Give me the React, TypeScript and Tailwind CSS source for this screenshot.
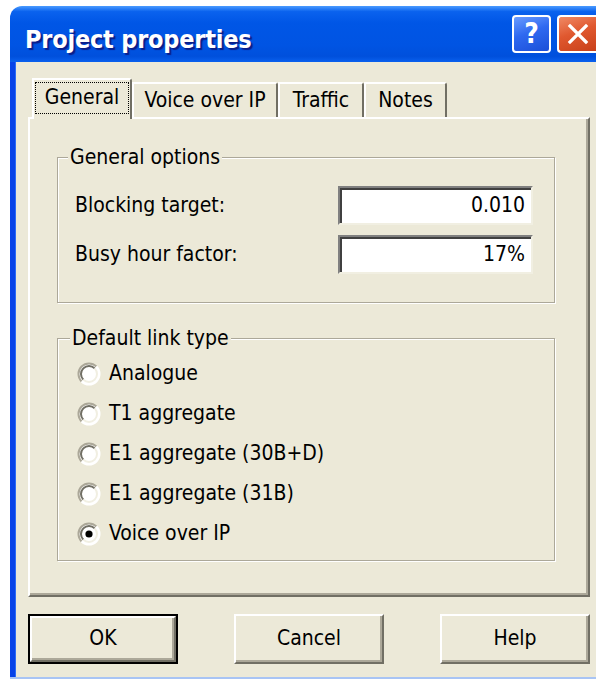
import React from "react";

const FONT = { fontFamily: '"DejaVu Sans Condensed", "DejaVu Sans", Tahoma, sans-serif' };

function Radio({ checked }: { checked?: boolean }) {
  return (
    <svg width="24" height="24" viewBox="0 0 24 24" className="shrink-0">
      <circle cx="12" cy="12" r="10.5" fill="#ffffff" />
      <path d="M4.57 19.43 A10.5 10.5 0 0 1 19.43 4.57" fill="none" stroke="#ACA899" strokeWidth="2" />
      <path d="M6.34 17.66 A8 8 0 0 1 17.66 6.34" fill="none" stroke="#716F64" strokeWidth="2" />
      <path d="M19.43 4.57 A10.5 10.5 0 0 1 4.57 19.43" fill="none" stroke="#ffffff" strokeWidth="2" />
      <path d="M17.66 6.34 A8 8 0 0 1 6.34 17.66" fill="none" stroke="#F1EFE2" strokeWidth="2" />
      {checked && <circle cx="12" cy="12" r="3.6" fill="#000000" />}
    </svg>
  );
}

function Field({ value }: { value: string }) {
  return (
    <div className="h-[39px] bg-white border-t-2 border-l-2 border-[#808080] border-r-2 border-b-2 border-r-[#F1EFE2] border-b-[#F1EFE2] shadow-[inset_2px_2px_0_#404040] flex items-center justify-end pr-[6px] text-[21px] text-black">
      {value}
    </div>
  );
}

function Tab({ label, selected, w }: { label: string; selected?: boolean; w: string }) {
  if (selected) {
    return (
      <div className={`${w} h-[41px] -mb-[2px] relative z-10 bg-[#ECE9D8] border-l-2 border-t-2 border-white border-r-2 border-r-[#716F64] rounded-tr-[3px] flex items-start pt-[2px] px-[1px]`}>
        <div className="flex-1 h-[32px] border border-dotted border-black flex items-center justify-center text-[21px] text-black">
          {label}
        </div>
      </div>
    );
  }
  return (
    <div className={`${w} h-[35px] bg-[#ECE9D8] border-l-2 border-t-2 border-white border-r-2 border-r-[#716F64] rounded-tr-[3px] flex items-center justify-center text-[21px] text-black`}>
      {label}
    </div>
  );
}

function Button({ label, isDefault }: { label: string; isDefault?: boolean }) {
  return (
    <div className={`w-[150px] h-[50px] ${isDefault ? "border-2 border-black" : ""}`}>
      <div className="w-full h-full bg-[#ECE9D8] border-t-2 border-l-2 border-white border-r-2 border-b-2 border-r-[#716F64] border-b-[#716F64] shadow-[inset_-2px_-2px_0_#ACA899] flex items-center justify-center text-[21px] text-black">
        {label}
      </div>
    </div>
  );
}

export default function App() {
  const links = ["Analogue", "T1 aggregate", "E1 aggregate (30B+D)", "E1 aggregate (31B)", "Voice over IP"];
  return (
    <div className="w-[596px] h-[679px] bg-white overflow-hidden" style={FONT}>
      <div className="ml-[10px] mt-[6px] w-[586px] h-[673px] flex flex-col">
        {/* caption bar */}
        <div className="h-[56px] shrink-0 rounded-tl-[12px] bg-[linear-gradient(180deg,#4A9BFF_0%,#0A62EE_10%,#0056E6_30%,#0054E3_70%,#0050DC_90%,#0A60EE_100%)] flex items-center pl-[15px] gap-[6px]">
          <div
            className="flex-1 pt-[12px] text-white text-[25px] font-bold tracking-[-0.2px] [text-shadow:2px_2px_1px_#0A1E8A]"
            style={{ fontFamily: '"DejaVu Sans Condensed", "DejaVu Sans", sans-serif' }}
          >
            Project properties
          </div>
          <div className="w-[39px] h-[38px] rounded-[4px] border-2 border-white bg-[linear-gradient(160deg,#6A9CFF_0%,#2F69F0_45%,#1B4FD8_100%)] flex items-center justify-center text-white text-[28px] font-bold leading-none">
            ?
          </div>
          <div className="w-[39px] h-[38px] rounded-l-[4px] border-2 border-r-0 border-white bg-[linear-gradient(160deg,#F08A66_0%,#E0582F_45%,#C8401A_100%)] flex items-center justify-center">
            <svg width="22" height="22" viewBox="0 0 22 22">
              <path d="M3 3 L19 19 M19 3 L3 19" stroke="#ffffff" strokeWidth="3.2" strokeLinecap="square" />
            </svg>
          </div>
        </div>

        {/* dialog body */}
        <div className="flex-1 flex border-l-[5px] border-[#0843E8] bg-[#ECE9D8] shadow-[inset_1px_0_0_#2C6CF6]">
          <div className="flex-1 flex flex-col pl-[13px] pr-[6px] pt-[16px]">
            {/* tabs */}
            <div className="h-[39px] flex items-end pl-[4px]">
              <Tab label="General" selected w="w-[100px]" />
              <Tab label="Voice over IP" w="w-[146px]" />
              <Tab label="Traffic" w="w-[86px]" />
              <Tab label="Notes" w="w-[83px]" />
            </div>

            {/* tab page */}
            <div className="h-[480px] border-t-2 border-l-2 border-white border-r-2 border-b-2 border-r-[#716F64] border-b-[#716F64] shadow-[inset_-2px_-2px_0_#ACA899] pl-[27px] pr-[33px] pt-[26px] flex flex-col">
              <fieldset className="border border-[#ACA899] shadow-[inset_1px_1px_0_#ffffff,1px_1px_0_#ffffff] pl-[17px] pr-[21px] pb-[28px] pt-[17px]">
                <legend className="-ml-[7px] px-[2px] bg-[#ECE9D8] text-[21px] text-black leading-[24px]">General options</legend>
                <div className="grid grid-cols-[1fr_195px] gap-y-[10px] items-center text-[21px] text-black">
                  <div>Blocking target:</div>
                  <Field value="0.010" />
                  <div>Busy hour factor:</div>
                  <Field value="17%" />
                </div>
              </fieldset>

              <fieldset className="mt-[23px] border border-[#ACA899] shadow-[inset_1px_1px_0_#ffffff,1px_1px_0_#ffffff] pl-[19px] pb-[6px] pt-[4px]">
                <legend className="-ml-[7px] px-[2px] bg-[#ECE9D8] text-[21px] text-black leading-[24px]">Default link type</legend>
                <div className="flex flex-col">
                  {links.map((l, i) => (
                    <div key={l} className="h-[40px] flex items-center gap-[8px] text-[21px] text-black">
                      <Radio checked={i === links.length - 1} />
                      <span>{l}</span>
                    </div>
                  ))}
                </div>
              </fieldset>
            </div>

            {/* buttons */}
            <div className="mt-[17px] flex justify-between">
              <Button label="OK" isDefault />
              <Button label="Cancel" />
              <Button label="Help" />
            </div>
            <div className="flex-1" />
          </div>
        </div>
        <div className="h-[2px] bg-[#A8C4F4] shrink-0" />
      </div>
    </div>
  );
}
